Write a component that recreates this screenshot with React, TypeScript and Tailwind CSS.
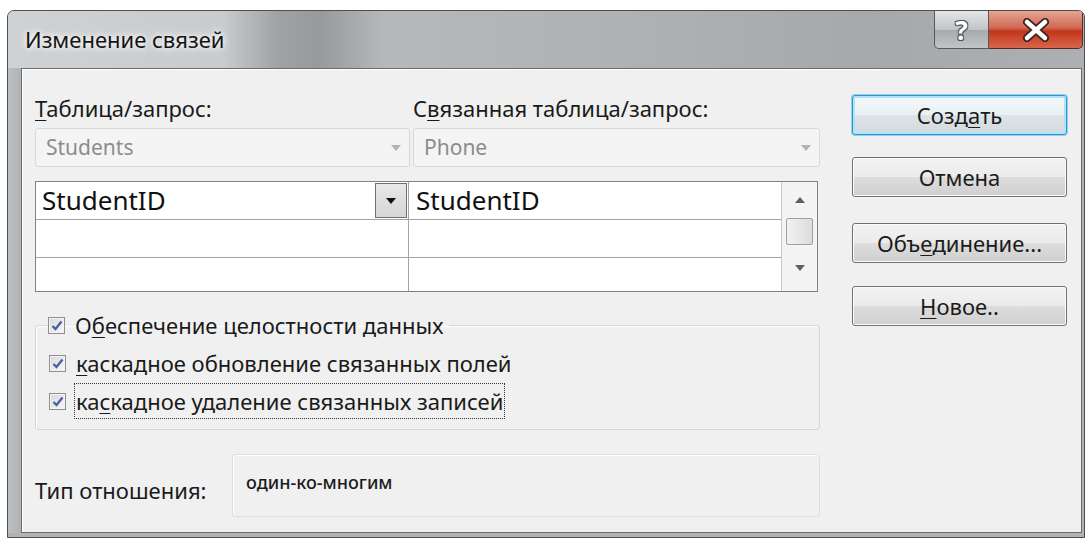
import React from "react";

const FONT = "font-['Noto_Sans','Open_Sans',sans-serif]";

function Key({ children }: { children: React.ReactNode }) {
  return <span className="underline decoration-1 underline-offset-[3px]">{children}</span>;
}

function SmallArrow({ up = false, color = "#b3b3b3" }: { up?: boolean; color?: string }) {
  return (
    <svg width="10" height="6" viewBox="0 0 10 6">
      <path d={up ? "M0 6h10L5 0z" : "M0 0h10L5 6z"} fill={color} />
    </svg>
  );
}

function DisabledCombo({ value, width }: { value: string; width: string }) {
  return (
    <div
      className={`flex h-[39px] ${width} items-center justify-between rounded-[3px] border border-[#d9d9d9] bg-[#f4f4f4] pl-[10px] pr-[8px] text-[21px] text-[#8c8c8c]`}
    >
      <span>{value}</span>
      <SmallArrow />
    </div>
  );
}

function CheckBox() {
  return (
    <div className="flex h-[17px] w-[17px] shrink-0 items-center justify-center border border-[#8f8f8f] bg-[linear-gradient(135deg,#d8d8d8,#f8f8f8)] shadow-[inset_0_0_0_1px_#f4f4f4]">
      <svg width="12" height="11" viewBox="0 0 12 11">
        <path d="M1.5 6 L4.5 9 L10.5 1.5" fill="none" stroke="#4560a8" strokeWidth="2.3" />
      </svg>
    </div>
  );
}

function Check({ label }: { label: React.ReactNode }) {
  return (
    <div className="flex items-center gap-[10px]">
      <CheckBox />
      <span>{label}</span>
    </div>
  );
}

function DialogButton({
  children,
  focused = false,
  className = "",
}: {
  children: React.ReactNode;
  focused?: boolean;
  className?: string;
}) {
  return (
    <button
      className={`flex h-[40px] w-[215px] items-center justify-center rounded-[3px] border text-[22px] text-[#1b1b1b] ${
        focused
          ? "border-[#3c8fc8] bg-[linear-gradient(#f4f8fa_0%,#eaf0f3_50%,#dde4e8_51%,#d3dade_100%)] shadow-[0_0_0_1px_#86d4f6,inset_0_0_0_2px_#aee4fb]"
          : "border-[#707070] bg-[linear-gradient(#f2f2f2_0%,#ebebeb_50%,#dddddd_51%,#cfcfcf_100%)] shadow-[inset_0_0_0_1px_#fcfcfc]"
      } ${className}`}
    >
      {children}
    </button>
  );
}

export default function App() {
  return (
    <div className={`min-h-[541px] bg-white pl-[7px] pt-[10px] ${FONT}`}>
      <div className="flex h-[528px] w-[1078px] flex-col overflow-hidden rounded-t-[7px] border border-[#4f4f4f] bg-[linear-gradient(90deg,#c2c5c8,#b3b6b9_30%,#aaadb0_70%,#b0b3b6)]">
        {/* title bar */}
        <div className="flex h-[57px] items-start justify-between bg-[linear-gradient(90deg,#cfd2d4_0%,#c9cccf_20%,#a0a3a6_25%,#979a9d_29%,#b6b9bc_35%,#aeb1b4_60%,#a6a9ac_80%,#adb0b3_100%)]">
          <span className="ml-[17px] mt-[13px] text-[22px] leading-[30px] text-[#141414] [text-shadow:0_0_10px_#ffffff,0_0_5px_#ffffff]">
            Изменение связей
          </span>
          <div className="mr-[1px] flex">
            <div className="flex h-[38px] w-[55px] items-center justify-center rounded-bl-[5px] border border-t-0 border-[#55585c] bg-[linear-gradient(#e4e6e8,#c1c4c7_50%,#a5a9ac_51%,#c2c5c8)]">
              <span className="text-[26px] font-bold leading-none text-white [text-shadow:1px_1px_0_#505050,-1px_-1px_0_#505050,1px_-1px_0_#505050,-1px_1px_0_#505050]">
                ?
              </span>
            </div>
            <div className="flex h-[38px] w-[94px] items-center justify-center rounded-br-[5px] border border-l-0 border-t-0 border-[#5a2a22] bg-[linear-gradient(#e6a493,#d16a55_45%,#c2361c_55%,#d8664c)]">
              <svg width="30" height="24" viewBox="0 0 30 24">
                <path d="M6 4 L24 20 M24 4 L6 20" stroke="#3b2420" strokeWidth="8" strokeLinecap="round" />
                <path d="M6 4 L24 20 M24 4 L6 20" stroke="#ffffff" strokeWidth="4.5" strokeLinecap="round" />
              </svg>
            </div>
          </div>
        </div>

        <div className="flex flex-1">
          <div className="w-[13px] bg-[linear-gradient(90deg,#bcbfc2,#afb2b5)]" />
          {/* client area */}
          <div className="flex h-[465px] w-[1061px] border border-[#6a6d70] bg-[#f0f0f0] pl-[13px] pt-[26px] text-[22px] text-[#1a1a1a] shadow-[inset_1px_1px_0_#ffffff]">
            <div className="flex w-[785px] flex-col">
              <div className="flex h-[26px] items-center">
                <span className="w-[378px]">
                  <Key>Т</Key>аблица/запрос:
                </span>
                <span>
                  С<Key>в</Key>язанная таблица/запрос:
                </span>
              </div>

              <div className="mt-[7px] flex gap-[3px]">
                <DisabledCombo value="Students" width="w-[375px]" />
                <DisabledCombo value="Phone" width="w-[407px]" />
              </div>

              {/* field grid */}
              <div className="mt-[14px] flex h-[111px] w-[783px] border border-[#7d8185] bg-white text-[26px] text-[#111111]">
                <div className="flex flex-1 flex-col">
                  <div className="flex h-[38px] border-b border-[#a3a3a3]">
                    <div className="flex w-[373px] items-center justify-between border-r border-[#a3a3a3] pl-[6px] pr-[1px]">
                      <span>StudentID</span>
                      <div className="flex h-[35px] w-[32px] items-center justify-center border border-[#6f6f6f] bg-[linear-gradient(#e8e8e8,#d6d6d6)]">
                        <SmallArrow color="#111111" />
                      </div>
                    </div>
                    <div className="flex flex-1 items-center pl-[7px]">StudentID</div>
                  </div>
                  <div className="flex h-[38px] border-b border-[#a3a3a3]">
                    <div className="w-[373px] border-r border-[#a3a3a3]" />
                    <div className="flex-1" />
                  </div>
                  <div className="flex flex-1">
                    <div className="w-[373px] border-r border-[#a3a3a3]" />
                    <div className="flex-1" />
                  </div>
                </div>
                <div className="flex w-[36px] flex-col items-center border-l border-[#c8c8c8] bg-[#f4f4f4]">
                  <div className="flex h-[36px] items-center">
                    <SmallArrow up color="#5f5f5f" />
                  </div>
                  <div className="h-[27px] w-[27px] rounded-[2px] border border-[#a0a0a0] bg-[linear-gradient(90deg,#f2f2f2,#dcdcdc)]" />
                  <div className="flex flex-1 items-center">
                    <SmallArrow color="#5f5f5f" />
                  </div>
                </div>
              </div>

              {/* referential integrity group */}
              <fieldset className="mt-[17px] h-[121px] rounded-[3px] border border-[#d5d5d5] pl-[12px] shadow-[inset_1px_1px_0_#ffffff]">
                <legend className="px-[0px]">
                  <div className="pr-[6px]">
                    <Check
                      label={
                        <>
                          О<Key>б</Key>еспечение целостности данных
                        </>
                      }
                    />
                  </div>
                </legend>
                <div className="mt-[3px] flex flex-col">
                  <div className="flex h-[37px] items-center pl-[1px]">
                    <Check
                      label={
                        <>
                          <Key>к</Key>аскадное обновление связанных полей
                        </>
                      }
                    />
                  </div>
                  <div className="flex h-[38px] items-center pl-[1px]">
                    <div className="flex items-center gap-[8px]">
                      <CheckBox />
                      <span className="border border-dotted border-[#333333] px-[1px] py-[4px] leading-[26px]">
                        ка<Key>с</Key>кадное удаление связанных записей
                      </span>
                    </div>
                  </div>
                </div>
              </fieldset>

              <div className="mt-[24px] flex items-center">
                <span className="w-[197px] pt-[10px]">Тип отношения:</span>
                <div className="flex h-[63px] w-[588px] items-start rounded-[3px] border border-[#dedede] pl-[13px] pt-[14px] text-[18px] font-medium text-[#1a1a1a] shadow-[inset_1px_1px_0_#ffffff]">
                  один-ко-многим
                </div>
              </div>
            </div>

            <div className="ml-[32px] flex w-[215px] flex-col">
              <DialogButton focused>
                Созд<Key>а</Key>ть
              </DialogButton>
              <DialogButton className="mt-[22px]">Отмена</DialogButton>
              <DialogButton className="mt-[26px]">
                Объ<Key>е</Key>динение...
              </DialogButton>
              <DialogButton className="mt-[23px]">
                <Key>Н</Key>овое..
              </DialogButton>
            </div>
          </div>
          <div className="flex-1 bg-[#b0b3b6]" />
        </div>
        <div className="h-[4px] bg-[#b0b3b6]" />
      </div>
    </div>
  );
}
